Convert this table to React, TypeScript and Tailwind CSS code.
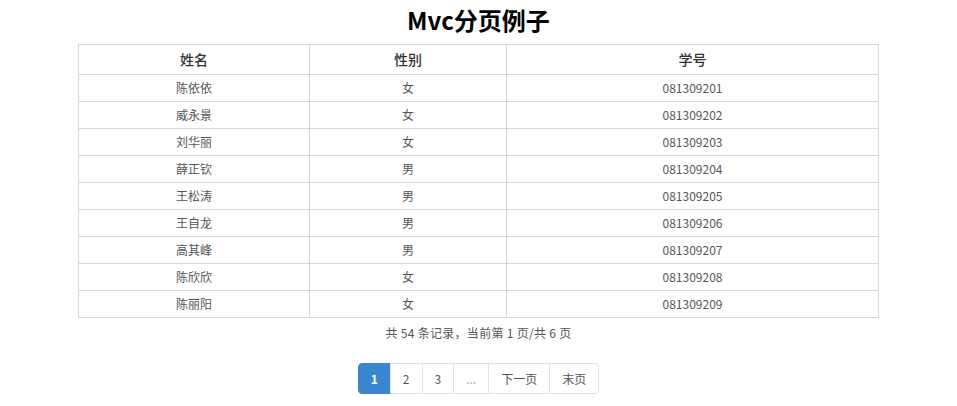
const students = [
  { name: '陈依依', sex: '女', no: '081309201' },
  { name: '威永景', sex: '女', no: '081309202' },
  { name: '刘华丽', sex: '女', no: '081309203' },
  { name: '薛正钦', sex: '男', no: '081309204' },
  { name: '王松涛', sex: '男', no: '081309205' },
  { name: '王自龙', sex: '男', no: '081309206' },
  { name: '高其峰', sex: '男', no: '081309207' },
  { name: '陈欣欣', sex: '女', no: '081309208' },
  { name: '陈丽阳', sex: '女', no: '081309209' },
];

const pages = ['1', '2', '3', '...', '下一页', '末页'];

const App = () => {
  return (
    <div
      className="w-[957px] bg-white text-[#555]"
      style={{ fontFamily: '"Noto Sans CJK SC", "Liberation Sans", sans-serif' }}
    >
      {/* 标题 */}
      <h1 className="pt-[5px] text-center text-[24px] font-bold leading-[30px] text-black">Mvc分页例子</h1>

      {/* 表格 */}
      <div className="mt-[9px] flex justify-center">
        <table className="w-[801px] table-fixed border-collapse text-[12px]">
          <colgroup>
            <col className="w-[231px]" />
            <col className="w-[197px]" />
            <col />
          </colgroup>
          <thead>
            <tr className="h-[30px]">
              <th className="border border-[#d6d6d6] text-[14px] font-medium text-[#333]">姓名</th>
              <th className="border border-[#d6d6d6] text-[14px] font-medium text-[#333]">性别</th>
              <th className="border border-[#d6d6d6] text-[14px] font-medium text-[#333]">学号</th>
            </tr>
          </thead>
          <tbody>
            {students.map((s) => (
              <tr key={s.no} className="h-[27px]">
                <td className="border border-[#d6d6d6] text-center">{s.name}</td>
                <td className="border border-[#d6d6d6] text-center">{s.sex}</td>
                <td className="border border-[#d6d6d6] text-center">{s.no}</td>
              </tr>
            ))}
          </tbody>
        </table>
      </div>

      {/* 统计 */}
      <p className="mt-[7px] text-center text-[12px] leading-[16px] tracking-[0.3px]">共 54 条记录，当前第 1 页/共 6 页</p>

      {/* 分页 */}
      <div className="mt-[22px] flex justify-center">
        <ul className="flex">
          {pages.map((p, i) => (
            <li
              key={p}
              className={`-ml-px flex h-[31px] items-center border px-3 text-[12px] first:ml-0 first:rounded-l-[4px] last:rounded-r-[4px] ${
                i === 0 ? 'border-[#3a87d0] bg-[#3a87d0] font-bold text-white' : 'border-[#e2e2e2] bg-white text-[#555]'
              } ${p === '...' ? 'text-[#aaa]' : ''}`}
            >
              {p}
            </li>
          ))}
        </ul>
      </div>
      <div className="h-[12px]" />
    </div>
  );
};

export default App;
